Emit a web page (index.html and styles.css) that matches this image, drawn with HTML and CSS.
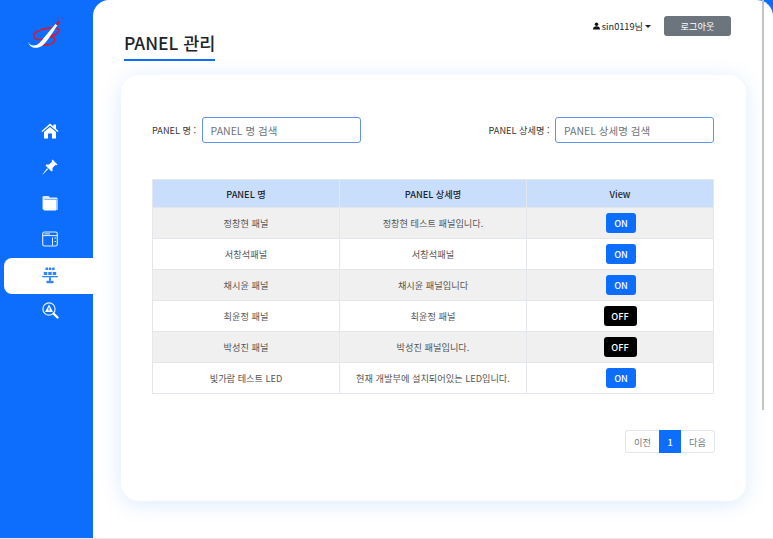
FILE: index.html
```html
<!DOCTYPE html>
<html lang="ko">
<head>
<meta charset="utf-8">
<title>PANEL 관리</title>
<link rel="stylesheet" href="styles.css">
</head>
<body>
<div class="app">
  <aside class="sidebar">
    <div class="logo">
      <svg width="50" height="50" viewBox="20 10 50 50">
        <path d="M34 37C32 33 40 29 49 28C55 27.500 60 28 59 31C58 34 52 36 46 36.500C52 36 56 37.500 54.500 41C52.500 45 44 46.500 38.500 43" fill="none" stroke="#e2132b" stroke-width="1.500"/>
        <path d="M34 37C35 39.500 39 40 43 39" fill="none" stroke="#e2132b" stroke-width="1.300"/>
        <path d="M28 41.500C29.500 46 35 47 39.500 43C45 37 50 30 55.500 24L57.500 25C52.500 33 47.500 41 42.500 45.500C37 49.500 29.500 48.500 28 41.500Z" fill="#fff"/>
        <path d="M56 24.500L57.500 20.500L60 21.500L58 25.500Z" fill="#e2132b"/>
        <path d="M58.500 17.500h1v1h-1zM61 16.500h1v1h-1zM62.500 18.500h1v1h-1z" fill="#e2132b"/>
      </svg>
    </div>
    <nav class="menu">
      <a class="menu-item">
        <svg width="18" height="16" viewBox="0 0 18 16"><path fill="#fff" d="M9 0.500L12.500 3.600V1.500H15V5.800L17.600 8.200 16.600 9 9 2.600 1.400 9 .4 8.200ZM9 4L15 9V15.500H11V10.500H7V15.500H3V9Z"/></svg>
      </a>
      <a class="menu-item">
        <svg width="16" height="16" viewBox="0 0 16 16"><path fill="#fff" d="M10.500 .5L15.500 5.500 14.300 6.300 13.300 6 10.500 9 10.600 11.500 9.500 12.500 3.500 6.500 4.500 5.400 7 5.500 10 2.700 9.700 1.700ZM6 10.200L.8 15.400 .5 15.200 5.100 9.300Z"/></svg>
      </a>
      <a class="menu-item">
        <svg width="16" height="16" viewBox="0 0 16 16"><path fill="#fff" d="M1.500 1H6.500L8 2.400H14.500A1 1 0 0 1 15.500 3.400V4H2.500V14.500L1.300 14.500A1 1 0 0 1 .5 13.500V2A1 1 0 0 1 1.500 1Z" opacity=".85"/><path fill="#fff" d="M1.500 4.500H13.500A1 1 0 0 1 14.500 5.500V14.500A1 1 0 0 1 13.500 15.500H2.500A1 1 0 0 1 1.500 14.500Z"/><rect x="14.500" y="4" width="1.200" height="11" rx=".5" fill="#cfe0ff"/></svg>
      </a>
      <a class="menu-item">
        <svg width="16" height="16" viewBox="0 0 16 16" fill="none" stroke="#e4eeff"><rect x=".7" y="1" width="14.600" height="14" rx="1.800" stroke-width="1.100"/><path d="M1 4.600H15M2.500 2.900H8M10.500 6.500V14.500" stroke-width="1"/><path d="M12.500 7H14M12.500 10.500H14" stroke-width="1"/></svg>
      </a>
      <a class="menu-item active">
        <svg class="solar" width="16" height="17" viewBox="0 0 16 17"><g fill="#0d6efd"><rect x="3.500" y=".5" width="2.600" height="2.600" rx=".4"/><rect x="6.800" y=".5" width="2.600" height="2.600" rx=".4"/><rect x="10.100" y=".5" width="2.600" height="2.600" rx=".4"/><rect x="1.800" y="5" width="3.500" height="3" rx=".4"/><rect x="6.200" y="5" width="3.500" height="3" rx=".4"/><rect x="10.700" y="5" width="3.500" height="3" rx=".4"/><rect x=".2" y="9" width="15.600" height="1.300"/><rect x="7" y="10.300" width="2" height="3.500"/><rect x="4.500" y="13.800" width="7" height="2.400"/></g></svg>
      </a>
      <a class="menu-item">
        <svg width="17" height="17" viewBox="0 0 17 17"><circle cx="7" cy="7" r="6.100" fill="none" stroke="#e4eeff" stroke-width="1.200"/><path d="M7 2.600L11 10H3Z" fill="#fff"/><path d="M6.600 5.500v3M7.400 5.500v3" stroke="#0d6efd" stroke-width=".6"/><path d="M11.500 11.500L15.500 15.500" stroke="#fff" stroke-width="2.400" stroke-linecap="round"/></svg>
      </a>
    </nav>
  </aside>
  <main class="main">
    <header class="topbar">
      <div class="user">
        <svg width="7" height="8" viewBox="0 0 8 8"><circle cx="4" cy="2" r="2" fill="#111"/><path d="M0 8C0 5.400 1.600 4.400 4 4.400S8 5.400 8 8Z" fill="#111"/></svg>
        <span class="user-name">sin0119님</span>
        <span class="caret"></span>
      </div>
      <button class="logout">로그아웃</button>
    </header>
    <h1 class="title">PANEL 관리</h1>
    <section class="card">
      <div class="search">
        <label class="field">
          <span class="field-label">PANEL 명 :</span>
          <input class="field-input" placeholder="PANEL 명 검색">
        </label>
        <label class="field">
          <span class="field-label">PANEL 상세명 :</span>
          <input class="field-input" placeholder="PANEL 상세명 검색">
        </label>
      </div>
      <table class="grid">
        <thead>
          <tr><th>PANEL 명</th><th>PANEL 상세명</th><th>View</th></tr>
        </thead>
        <tbody>
          <tr><td>정창현 패널</td><td>정창현 테스트 패널입니다.</td><td><button class="toggle on">ON</button></td></tr>
          <tr><td>서창석패널</td><td>서창석패널</td><td><button class="toggle on">ON</button></td></tr>
          <tr><td>채시윤 패널</td><td>채시윤 패널입니다</td><td><button class="toggle on">ON</button></td></tr>
          <tr><td>최윤정 패널</td><td>최윤정 패널</td><td><button class="toggle off">OFF</button></td></tr>
          <tr><td>박성진 패널</td><td>박성진 패널입니다.</td><td><button class="toggle off">OFF</button></td></tr>
          <tr><td>빛가람 테스트 LED</td><td>현재 개발부에 설치되어있는 LED입니다.</td><td><button class="toggle on">ON</button></td></tr>
        </tbody>
      </table>
      <div class="pager">
        <a class="page prev">이전</a>
        <a class="page current">1</a>
        <a class="page next">다음</a>
      </div>
    </section>
    <div class="scroll-thumb"></div>
  </main>
</div>
</body>
</html>
```

FILE: styles.css
```css
* { box-sizing: border-box; }
html, body { margin: 0; padding: 0; height: 100%; overflow: hidden; }
body {
  background: #e9e9e9;
  font-family: "Noto Sans CJK KR", "Noto Sans", sans-serif;
  color: #212529;
  font-size: 9.2px;
}
.app { display: flex; height: 538px; background: #0d6efd; }
.sidebar { width: 93px; flex: none; }
.logo { height: 114px; padding: 10px 0 0 20px; }
.logo svg { display: block; }
.menu { display: flex; flex-direction: column; padding-left: 4px; }
.menu-item {
  height: 36px;
  display: flex;
  align-items: center;
  justify-content: center;
  padding-left: 3px;
  padding-bottom: 3px;
  border-radius: 8px 0 0 8px;
}
.menu-item.active { background: #fff; padding-bottom: 1px; }
.solar { opacity: .85; }
.main {
  flex: 1;
  position: relative;
  background: #fff;
  border-radius: 16px 16px 0 0;
  padding: 0 27px 0 28px;
  min-width: 0;
}
.topbar {
  display: flex;
  justify-content: flex-end;
  align-items: center;
  gap: 13px;
  padding: 16px 15px 0 0;
  height: 36px;
}
.user { display: flex; align-items: center; color: #212529; font-size: 9.2px; }
.user svg { margin-right: 2px; }
.caret {
  margin-left: 2px;
  width: 0; height: 0;
  border-left: 3px solid transparent;
  border-right: 3px solid transparent;
  border-top: 3px solid #212529;
}
.logout {
  width: 67px; height: 20px;
  border: 0; border-radius: 3px;
  background: #6c757d; color: #fff;
  font: inherit; font-size: 9.2px;
  padding: 0;
}
.title {
  display: inline-block;
  margin: -7px 0 0 3px;
  padding-bottom: 2px;
  border-bottom: 2px solid #0d6efd;
  font-size: 17.5px;
  line-height: 28px;
  font-weight: 500;
  color: #212529;
}
.card {
  width: 625px;
  height: 426px;
  margin-top: 14px;
  padding: 42px 32px 0 31px;
  background: #fff;
  border-radius: 18px;
  box-shadow: 0 3px 22px rgba(13, 110, 253, .14);
}
.search { display: flex; justify-content: space-between; align-items: center; }
.field { display: flex; align-items: center; gap: 5.5px; }
.field-label { font-size: 9.2px; color: #333; }
.field-input {
  width: 159px; height: 26px;
  padding: 0 8px;
  border: 1.5px solid #5f92f0;
  border-radius: 3px;
  font: inherit; font-size: 10.5px;
  outline: none;
  color: #212529;
}
.field-input::placeholder { color: #6c757d; }
.grid {
  width: 562px;
  margin-top: 36px;
  border-collapse: collapse;
  table-layout: fixed;
}
.grid th, .grid td {
  border: 1px solid #e3e6ea;
  text-align: center;
  padding: 0;
  height: 31px;
  font-size: 9.2px;
}
.grid th { height: 28px; background: #c9defd; color: #212529; font-weight: 500; }
.grid td { color: #555; }
.grid tbody tr:nth-child(odd) td { background: #f0f0f0; }
.toggle {
  display: block;
  margin: 0 auto;
  height: 20px;
  border: 0; border-radius: 3px;
  font: inherit; font-size: 9.2px; font-weight: 500;
  color: #fff;
  padding: 0;
}
.toggle.on { width: 30px; background: #0d6efd; transform: translateX(1px); }
.toggle.off { width: 33px; background: #000; }
.pager {
  display: flex;
  justify-content: flex-end;
  margin: 36px -1px 0 0;
  height: 23px;
}
.page {
  display: flex; align-items: center; justify-content: center;
  border: 1px solid #e3e6ea;
  color: #6c757d;
  font-size: 9.2px;
}
.prev { width: 34px; border-radius: 3px 0 0 3px; border-right: 0; }
.current { width: 22px; background: #0d6efd; border-color: #0d6efd; color: #fff; font-weight: 500; }
.next { width: 34px; border-radius: 0 3px 3px 0; border-left: 0; }
.scroll-thumb {
  position: absolute;
  top: 0;
  right: 9px;
  width: 2px;
  height: 410px;
  background: #c4c4c4;
}
```
